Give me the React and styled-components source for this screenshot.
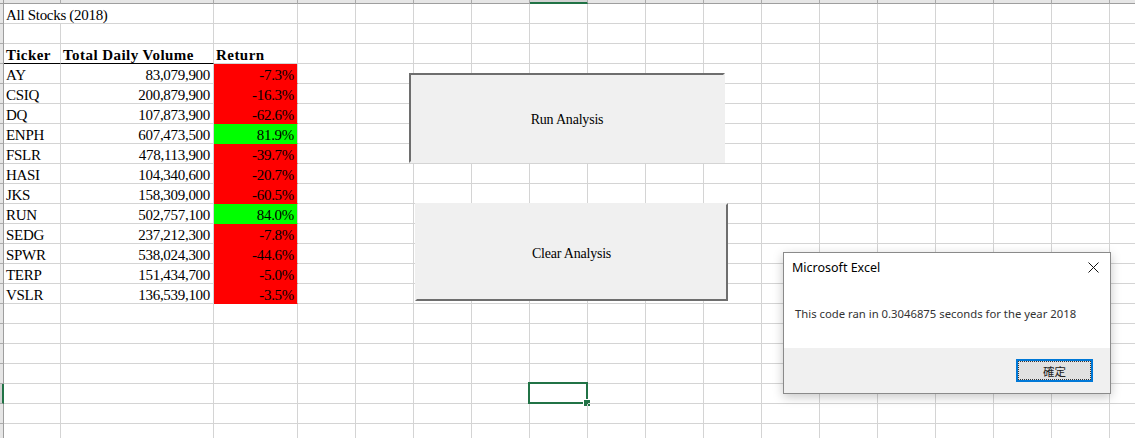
import styled, { createGlobalStyle } from "styled-components";

const GlobalStyle = createGlobalStyle`
  html, body {
    margin: 0;
    padding: 0;
    background: #fff;
    overflow: hidden;
  }
`;

const COLS = [57, 153, 84, ...Array(15).fill(58)];
const ROW_COUNT = 22;
const SELECTED = { row: 20, col: 7 };

const stocks = [
  ["AY", "83,079,900", "-7.3%", false],
  ["CSIQ", "200,879,900", "-16.3%", false],
  ["DQ", "107,873,900", "-62.6%", false],
  ["ENPH", "607,473,500", "81.9%", true],
  ["FSLR", "478,113,900", "-39.7%", false],
  ["HASI", "104,340,600", "-20.7%", false],
  ["JKS", "158,309,000", "-60.5%", false],
  ["RUN", "502,757,100", "84.0%", true],
  ["SEDG", "237,212,300", "-7.8%", false],
  ["SPWR", "538,024,300", "-44.6%", false],
  ["TERP", "151,434,700", "-5.0%", false],
  ["VSLR", "136,539,100", "-3.5%", false],
];

function cellContent(row, col) {
  if (row === 1 && col === 0) return { text: "All Stocks (2018)", span: 2 };
  if (row === 1 && col === 1) return null;
  if (row === 3) {
    const heads = ["Ticker", "Total Daily Volume", "Return"];
    if (col < 3) return { text: heads[col], bold: true, underline: col < 2 };
  }
  const stock = stocks[row - 4];
  if (stock) {
    if (col === 0) return { text: stock[0] };
    if (col === 1) return { text: stock[1], align: "right" };
    if (col === 2) return { text: stock[2], align: "right", fill: stock[3] ? "#00ff00" : "#ff0000" };
  }
  return {};
}

export default function App() {
  const cells = [];
  cells.push(<Corner key="corner" />);
  COLS.forEach((_, c) => cells.push(<ColHead key={`h${c}`} $active={c === SELECTED.col} />));

  for (let r = 1; r <= ROW_COUNT; r++) {
    cells.push(<RowHead key={`r${r}`} $active={r === SELECTED.row} />);
    COLS.forEach((_, c) => {
      const info = cellContent(r, c);
      if (info === null) return;
      const selected = r === SELECTED.row && c === SELECTED.col;
      cells.push(
        <Cell
          key={`${r}-${c}`}
          $span={info.span || 1}
          $align={info.align || "left"}
          $fill={info.fill}
          $bold={info.bold}
          $underline={info.underline}
        >
          {info.text}
          {selected && (
            <Selection>
              <FillHandle />
            </Selection>
          )}
        </Cell>
      );
    });
  }

  return (
    <>
      <GlobalStyle />
      <Sheet>
        <Grid>{cells}</Grid>

        <MacroButton $pressed style={{ left: 409, top: 73, width: 316, height: 90 }}>
          Run Analysis
        </MacroButton>
        <MacroButton style={{ left: 415, top: 203, width: 313, height: 98 }}>
          Clear Analysis
        </MacroButton>

        <Dialog>
          <TitleBar>
            <Title>Microsoft Excel</Title>
            <CloseIcon width="11" height="11" viewBox="0 0 11 11">
              <path d="M0.5 0.5 L10.5 10.5 M10.5 0.5 L0.5 10.5" stroke="#111" strokeWidth="1" />
            </CloseIcon>
          </TitleBar>
          <Message>This code ran in 0.3046875 seconds for the year 2018</Message>
          <Footer>
            <OkButton>確定</OkButton>
          </Footer>
        </Dialog>
      </Sheet>
    </>
  );
}

const Sheet = styled.div`
  position: relative;
  width: 1135px;
  height: 438px;
  overflow: hidden;
  background: #fff;
`;

const Grid = styled.div`
  display: grid;
  grid-template-columns: 4px ${COLS.map((w) => `${w}px`).join(" ")};
  grid-template-rows: 4px repeat(${ROW_COUNT}, 20px);
  font-family: "Liberation Serif", "Times New Roman", serif;
  font-size: 15px;
  letter-spacing: -0.3px;
  color: #000;
`;

const Corner = styled.div`
  background: #e6e6e6;
  border-right: 1px solid #9e9e9e;
  border-bottom: 1px solid #9e9e9e;
  box-sizing: border-box;
`;

const ColHead = styled.div`
  box-sizing: border-box;
  background: ${(p) => (p.$active ? "#d2d2d2" : "#e6e6e6")};
  border-right: 1px solid #ababab;
  border-bottom: ${(p) => (p.$active ? "2px solid #217346" : "1px solid #9e9e9e")};
`;

const RowHead = styled.div`
  box-sizing: border-box;
  background: ${(p) => (p.$active ? "#d2d2d2" : "#e6e6e6")};
  border-bottom: 1px solid #ababab;
  border-right: ${(p) => (p.$active ? "2px solid #217346" : "1px solid #9e9e9e")};
`;

const Cell = styled.div`
  position: relative;
  box-sizing: border-box;
  grid-column: span ${(p) => p.$span};
  display: flex;
  align-items: flex-end;
  justify-content: ${(p) => (p.$align === "right" ? "flex-end" : "flex-start")};
  padding: 0 ${(p) => (p.$align === "right" ? "3px" : "0")} 0 2px;
  background: ${(p) => p.$fill || "transparent"};
  border-right: 1px solid #d4d4d4;
  border-bottom: 1px solid ${(p) => (p.$underline ? "#000" : p.$fill || "#d4d4d4")};
  font-weight: ${(p) => (p.$bold ? 700 : 400)};
  letter-spacing: ${(p) => (p.$bold ? "0.45px" : "-0.3px")};
  line-height: 15px;
  white-space: nowrap;
`;

const Selection = styled.div`
  position: absolute;
  top: -2px;
  left: -2px;
  right: -1px;
  bottom: -1px;
  border: 2px solid #217346;
  pointer-events: none;
`;

const FillHandle = styled.div`
  position: absolute;
  right: -4px;
  bottom: -4px;
  width: 6px;
  height: 6px;
  background: #217346;
  box-shadow: -1px -1px 0 0 #fff;
`;

const MacroButton = styled.div`
  position: absolute;
  box-sizing: border-box;
  display: flex;
  align-items: center;
  justify-content: center;
  padding-top: 3px;
  background: #f0f0f0;
  font-family: "Liberation Serif", "Times New Roman", serif;
  font-size: 14px;
  letter-spacing: -0.2px;
  color: #000;
  border-top: 2px solid ${(p) => (p.$pressed ? "#6e6e6e" : "#f0f0f0")};
  border-left: 2px solid ${(p) => (p.$pressed ? "#6e6e6e" : "#f0f0f0")};
  border-right: 2px solid ${(p) => (p.$pressed ? "#f0f0f0" : "#6e6e6e")};
  border-bottom: 2px solid ${(p) => (p.$pressed ? "#f0f0f0" : "#6e6e6e")};
`;

const Dialog = styled.div`
  position: absolute;
  left: 783px;
  top: 252px;
  width: 328px;
  height: 142px;
  box-sizing: border-box;
  display: flex;
  flex-direction: column;
  background: #fff;
  border: 1px solid #8a8a8a;
  box-shadow: 0 3px 10px rgba(0, 0, 0, 0.22);
  font-family: "Noto Sans", "Segoe UI", sans-serif;
`;

const TitleBar = styled.div`
  height: 29px;
  display: flex;
  align-items: center;
  justify-content: space-between;
  padding: 0 11px 0 8px;
`;

const Title = styled.span`
  font-size: 12.5px;
  color: #000;
`;

const CloseIcon = styled.svg`
  display: block;
`;

const Message = styled.div`
  height: 66px;
  box-sizing: border-box;
  padding: 24px 0 0 11px;
  font-size: 11.3px;
  color: #333;
  white-space: nowrap;
`;

const Footer = styled.div`
  flex: 1;
  display: flex;
  justify-content: flex-end;
  align-items: flex-start;
  padding: 11px 17px 0 0;
  background: #f0f0f0;
`;

const OkButton = styled.div`
  width: 77px;
  height: 23px;
  box-sizing: border-box;
  display: flex;
  align-items: center;
  justify-content: center;
  background: #e1e1e1;
  border: 2px solid #0078d7;
  outline: 1px dotted #333;
  outline-offset: -3px;
  font-family: "Noto Sans CJK TC", "Noto Sans", sans-serif;
  font-size: 11.5px;
  color: #222;
`;
